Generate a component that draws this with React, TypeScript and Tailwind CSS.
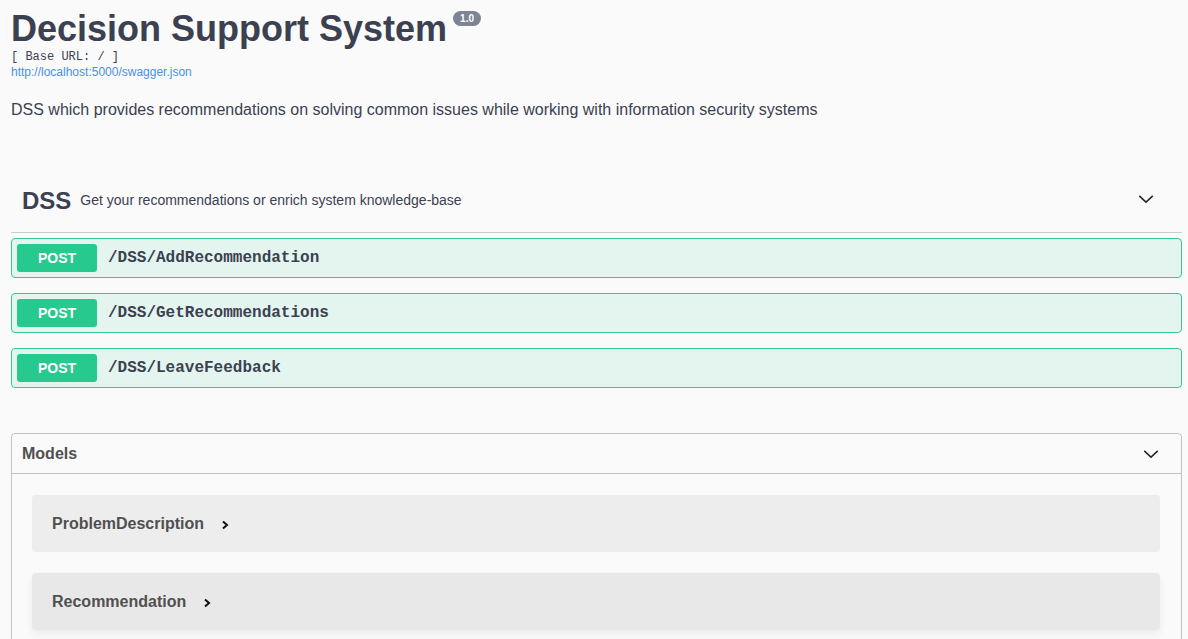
import React from "react";

const Chevron = ({ size = 18 }: { size?: number }) => (
  <svg width={size} height={size} viewBox="0 0 20 20" fill="none">
    <path d="M2.5 6.5 L10 13.5 L17.5 6.5" stroke="#222" strokeWidth="1.6" />
  </svg>
);

const Arrow = () => (
  <svg width="10" height="12" viewBox="0 0 10 12" fill="none">
    <path d="M3 2.5 L7 6 L3 9.5" stroke="#111" strokeWidth="2" />
  </svg>
);

const ops = ["/DSS/AddRecommendation", "/DSS/GetRecommendations", "/DSS/LeaveFeedback"];

export default function App() {
  return (
    <div className="min-h-[639px] bg-[#fafafa] pl-[11px] pr-[6px] text-[#3b4151]" style={{ fontFamily: '"Liberation Sans", Arial, sans-serif' }}>
      <div className="pt-[7px]">
        <div className="flex items-start">
          <h1 className="text-[36px] font-bold leading-[44px] text-[#3b4151]">Decision Support System</h1>
          <span className="ml-[6px] mt-[4px] rounded-full bg-[#7d8492] px-[7px] text-[10px] font-bold leading-[15px] text-white">1.0</span>
        </div>
        <div className="mt-[-1px] text-[12px] leading-[14px]" style={{ fontFamily: '"Liberation Mono", monospace' }}>[ Base URL: / ]</div>
        <div className="text-[12px] leading-[16px] text-[#4990e2]">http://localhost:5000/swagger.json</div>
        <p className="mt-[20px] text-[16px] leading-[20px]">DSS which provides recommendations on solving common issues while working with information security systems</p>
      </div>

      <div className="mt-[59px]">
        <div className="flex h-[54px] items-center border-b border-[#3b415140] pb-[10px] pl-[11px] pr-[27px]">
          <span className="text-[24px] font-bold">DSS</span>
          <span className="ml-[9px] text-[14px]">Get your recommendations or enrich system knowledge-base</span>
          <span className="ml-auto mb-[4px]"><Chevron /></span>
        </div>
        <div className="mt-[5px] flex flex-col gap-[15px]">
          {ops.map((p) => (
            <div key={p} className="flex h-[40px] items-center rounded-[4px] border border-[#2fcb8f] bg-[#e3f5ee] px-[5px]">
              <span className="flex h-[28px] w-[80px] items-center justify-center rounded-[3px] bg-[#26ca8e] text-[14px] font-bold text-white">POST</span>
              <span className="ml-[11px] text-[16px] font-bold text-[#3b4151]" style={{ fontFamily: '"Liberation Mono", monospace' }}>{p}</span>
            </div>
          ))}
        </div>
      </div>

      <div className="mt-[45px] rounded-[4px] border border-[#3b41514d]">
        <div className="flex h-[40px] items-center border-b border-[#3b41514d] pl-[10px] pr-[21px]">
          <span className="text-[16px] font-bold text-[#505050]">Models</span>
          <span className="ml-auto"><Chevron /></span>
        </div>
        <div className="flex flex-col gap-[21px] pl-[20px] pr-[21px] pt-[21px] pb-[20px]">
          {["ProblemDescription", "Recommendation"].map((m, i) => (
            <div key={m} className={`flex h-[57px] items-center rounded-[4px] px-[20px] ${i === 1 ? "bg-[#e8e8e8] shadow-[0_4px_8px_rgba(0,0,0,0.06)]" : "bg-[#ededed]"}`}>
              <span className="text-[16px] font-bold text-[#505050]">{m}</span>
              <span className="ml-[16px] mt-[2px]"><Arrow /></span>
            </div>
          ))}
        </div>
      </div>
    </div>
  );
}
